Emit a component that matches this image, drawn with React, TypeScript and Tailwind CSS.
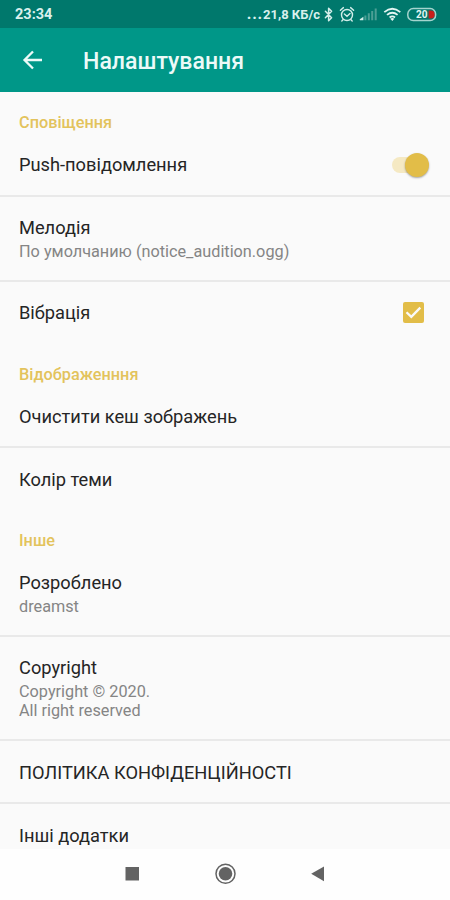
import { useState } from 'react';

const HeaderIcons = () => (
  <svg width="190" height="28" viewBox="0 0 190 28" fill="none" className="shrink-0">
    {/* Bluetooth */}
    <path
      d="M65.4 11.2l6.2 6.6-3 3V8.2l3 3-6.2 6.6"
      stroke="#d3eeea"
      strokeWidth={1.5}
      strokeLinejoin="round"
      strokeLinecap="round"
    />
    {/* Alarm */}
    <circle cx="87" cy="15" r="5.5" stroke="#d3eeea" strokeWidth={1.4} />
    <path
      d="M84.4 14l2.6 2.2 3-2.7M80.4 10.2l3-2.6M93.6 10.2l-3-2.6M83 19.7l-1.2 1.2M91 19.7l1.2 1.2"
      stroke="#d3eeea"
      strokeWidth={1.4}
      strokeLinecap="round"
    />
    {/* Mobile signal */}
    <path d="M99.8 20.2v-1l3.6-2.4v3.4z" fill="#d3eeea" />
    <path d="M105.4 15.4v4.8M108.8 13.2v7M112.2 11v9.2M115.7 8.6v11.6" stroke="#4c9f95" strokeWidth={2} />
    {/* Wi-Fi */}
    <path
      d="M124.3 12.1q8-6.6 16 0M127 14.9q5.3-4.4 10.6 0M129.6 17.5q2.7-2.2 5.4 0"
      stroke="#e3f5f2"
      strokeWidth={1.8}
    />
    <path d="M132.3 21l-2-2.2q2-1.4 4 0z" fill="#e3f5f2" />
    {/* Battery */}
    <path d="M168.6 10.6h2.2a4 4 0 0 1 0 8h-2.2z" fill="#c81f1b" />
    <rect x="147.8" y="8.6" width="27.8" height="12" rx="5.4" stroke="#a5d4ce" strokeWidth={1.5} />
    <text
      x="161.8"
      y="18.2"
      textAnchor="middle"
      fill="#e3f5f2"
      className="font-[Roboto,sans-serif] text-[10px] font-bold"
    >
      20
    </text>
  </svg>
);

const SectionTitle = ({ title }: { title: string }) => (
  <h2 className="flex h-[41.5px] shrink-0 items-center pl-[19px] pt-[20px] text-[16.3px] leading-[23px] font-medium text-[#e3c35c]">
    {title}
  </h2>
);

type RowProps = {
  title: string;
  summary?: string[];
  divider?: boolean;
  onClick?: () => void;
  children?: React.ReactNode;
};

const Row = ({ title, summary = [], divider = false, onClick, children }: RowProps) => (
  <div
    onClick={onClick}
    className={`flex shrink-0 items-center justify-between px-[19px] pt-[19.5px] ${
      divider ? 'border-b-2 border-[#e9e9e9] pb-[17.5px]' : 'pb-[18.5px]'
    }`}
  >
    <div>
      <h3 className="text-[18.25px] leading-6 text-[#252525]">{title}</h3>
      {summary.length > 0 && (
        <div className="pt-[1.5px] pb-px text-[16.25px] leading-[19.5px] text-[#858585]">
          {summary.map((line) => (
            <p key={line}>{line}</p>
          ))}
        </div>
      )}
    </div>
    {children}
  </div>
);

export default function App() {
  const [push, setPush] = useState(true);
  const [vibration, setVibration] = useState(true);

  return (
    <div className="flex h-[900px] w-[450px] flex-col overflow-hidden bg-[#fafafa] font-[Roboto,sans-serif]">
      <div className="flex h-7 shrink-0 items-center justify-between bg-[#00786c] pl-[15px] text-[#d9f0ed]">
        <span className="pt-0.5 text-[14.5px] font-bold">23:34</span>
        <div className="flex items-center">
          <span className="-mr-[60px] pt-0.5 text-[13px] font-bold whitespace-nowrap">
            <span className="text-[16px] leading-none tracking-[0.8px]">...</span>21,8 КБ/с
          </span>
          <HeaderIcons />
        </div>
      </div>

      <header className="flex h-16 shrink-0 items-center bg-[#009788] pl-[22px] text-[#ecfaf8]">
        <svg width="21" height="20" viewBox="0 0 21 20" fill="none" stroke="currentColor" strokeWidth={2.3}>
          <path d="M20 10H2.5M11 1.5L2.5 10l8.5 8.5" />
        </svg>
        <h1 className="pl-[40px] pt-[3px] text-[23.1px] leading-none font-medium">Налаштування</h1>
      </header>

      <main className="flex min-h-0 flex-1 flex-col overflow-hidden">
        <SectionTitle title="Сповіщення" />
        <Row title="Push-повідомлення" divider onClick={() => setPush(!push)}>
          <div className="mr-0.5 flex h-4 w-[37px] items-center rounded-full">
            <div className={`h-4 w-8 shrink-0 rounded-full ${push ? 'bg-[#f5e9c3]' : 'bg-gray-300'}`}></div>
            <div
              className={`h-6 w-6 shrink-0 rounded-full shadow-[0_1px_2px_rgba(0,0,0,0.35)] ${
                push ? '-ml-[19px] bg-[#e2bd48]' : '-ml-8 bg-gray-100'
              }`}
            ></div>
          </div>
        </Row>
        <Row title="Мелодія" summary={['По умолчанию (notice_audition.ogg)']} divider />
        <Row title="Вібрація" onClick={() => setVibration(!vibration)}>
          <div
            className={`mr-[7px] mb-[2px] flex h-[21px] w-[21px] items-center justify-center rounded-[2px] ${
              vibration ? 'bg-[#e2bd48]' : 'border-2 border-gray-500'
            }`}
          >
            {vibration && (
              <svg width="17" height="13" viewBox="0 0 17 13" fill="none" stroke="#fafafa" strokeWidth={2.3}>
                <path d="M1.5 6.2l4.8 4.7 9-9.3" />
              </svg>
            )}
          </div>
        </Row>

        <SectionTitle title="Відображенння" />
        <Row title="Очистити кеш зображень" divider />
        <Row title="Колір теми" />

        <SectionTitle title="Інше" />
        <Row title="Розроблено" summary={['dreamst']} divider />
        <Row title="Copyright" summary={['Copyright © 2020.', 'All right reserved']} divider />
        <Row title="ПОЛІТИКА КОНФІДЕНЦІЙНОСТІ" divider />
        <Row title="Інші додатки" />
      </main>

      <nav className="flex h-[51px] shrink-0 bg-[#fefefe] pl-[125px]">
        <svg width="200" height="51" viewBox="0 0 200 51" fill="#636363">
          <rect x="0.5" y="18" width="13.5" height="13.5" />
          <circle cx="100.5" cy="24.8" r="6.8" />
          <circle cx="100.5" cy="24.8" r="9.5" fill="none" stroke="#636363" strokeWidth={1.5} />
          <path d="M186.2 24.8L199 17.6v14.6z" />
        </svg>
      </nav>
    </div>
  );
}
